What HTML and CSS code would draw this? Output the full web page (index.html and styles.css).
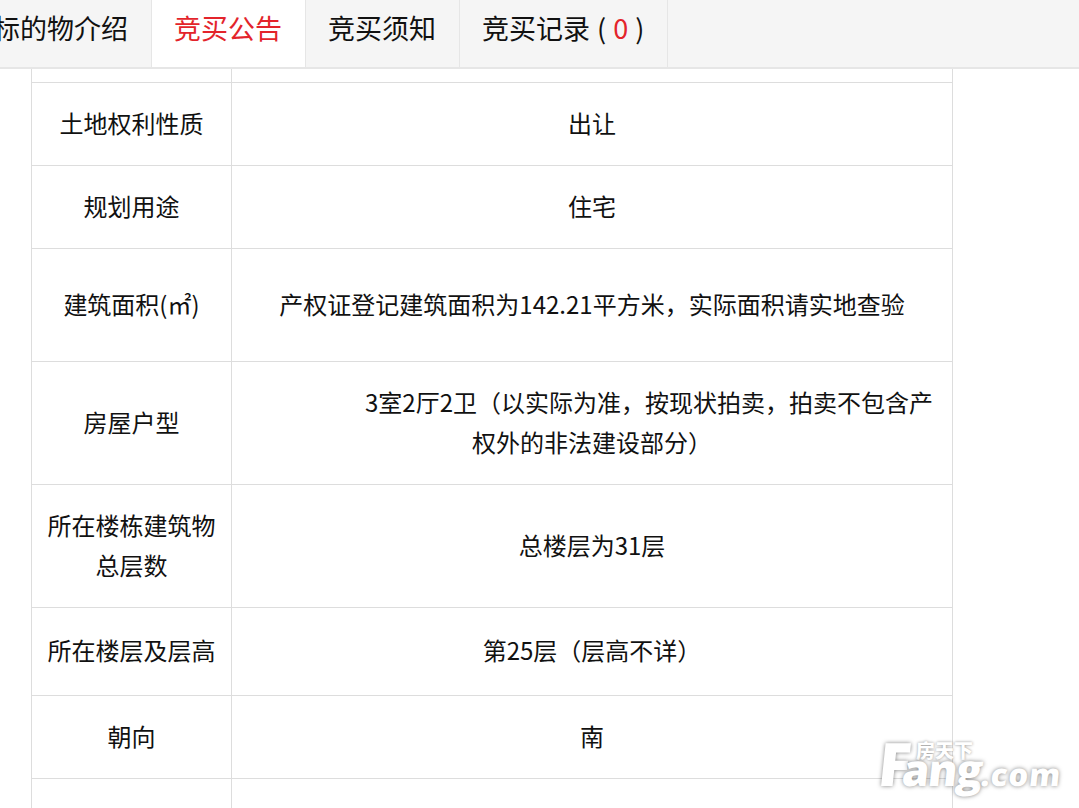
FILE: index.html
```
<!DOCTYPE html>
<html lang="zh-CN">
<head>
<meta charset="utf-8">
<title>竞买公告</title>
<link rel="stylesheet" href="styles.css">
</head>
<body>
<nav class="tabs">
  <div class="tab">标的物介绍</div>
  <div class="tab tab-active">竞买公告</div>
  <div class="tab">竞买须知</div>
  <div class="tab tab-wide">竞买记录 ( <span class="count">0</span> )</div>
</nav>
<main class="content">
  <table class="info">
    <colgroup><col class="col-label"><col></colgroup>
    <tr class="r-top"><td></td><td></td></tr>
    <tr class="r-83"><td>土地权利性质</td><td>出让</td></tr>
    <tr class="r-83"><td>规划用途</td><td>住宅</td></tr>
    <tr class="r-113"><td>建筑面积(㎡)</td><td>产权证登记建筑面积为142.21平方米，实际面积请实地查验</td></tr>
    <tr class="r-123"><td>房屋户型</td><td class="indented">3室2厅2卫（以实际为准，按现状拍卖，拍卖不包含产权外的非法建设部分）</td></tr>
    <tr class="r-123"><td>所在楼栋建筑物总层数</td><td>总楼层为31层</td></tr>
    <tr class="r-88"><td>所在楼层及层高</td><td>第25层（层高不详）</td></tr>
    <tr class="r-83"><td>朝向</td><td>南</td></tr>
    <tr class="r-83"><td></td><td></td></tr>
  </table>
</main>
<div class="watermark" aria-label="房天下 Fang.com">
  <span class="wm-cn">房天下</span>
  <span class="wm-en"><span class="wm-f">F</span><span class="wm-ang">ang</span><span class="wm-com">.com</span></span>
</div>
</body>
</html>
```
FILE: styles.css
```
* { box-sizing: border-box; }
html, body { height: 100%; }
body {
  margin: 0;
  height: 808px;
  overflow: hidden;
  background: #fff;
  color: #111;
  font-family: "Noto Sans CJK SC", "Liberation Sans", sans-serif;
  position: relative;
}
.tabs {
  display: flex;
  height: 69px;
  margin-left: -29px;
  background: #f5f5f5;
  border-bottom: 2px solid #e6e6e6;
}
.tab {
  height: 67px;
  line-height: 55px;
  padding: 0 23px 0 22px;
  font-size: 27px;
  border-right: 1px solid #e6e6e6;
  white-space: nowrap;
  color: #111;
}
.tab-wide { word-spacing: 1px; }
.tab-active {
  background: #fff;
  color: #e3242b;
}
.count { color: #e3242b; }
.content { padding-left: 31px; }
.info {
  width: 922px;
  table-layout: fixed;
  border-collapse: collapse;
  font-size: 24px;
  line-height: 40px;
  text-align: center;
}
.info td {
  border: 1px solid #ddd;
  padding: 0 15px 2px;
  vertical-align: middle;
}
.info td + td { padding: 0 18px 2px; }
.col-label { width: 200px; }
.r-top { height: 13px; }
.r-top td { border-top: 0; line-height: 1px; }
.info .r-top td { padding-bottom: 0; }
.r-83 { height: 83px; }
.r-88 { height: 88px; }
.r-113 { height: 113px; }
.r-123 { height: 123px; }
.info .indented { text-indent: 114px; }
.watermark {
  position: absolute;
  left: 878px;
  top: 733px;
  width: 190px;
  height: 60px;
  color: #fff;
  pointer-events: none;
}
.wm-cn {
  position: absolute;
  left: 38px;
  top: 5px;
  font-size: 19px;
  line-height: 24px;
  font-weight: 900;
  text-shadow: 0 0 3px rgba(0,0,0,.45);
}
.wm-en {
  position: absolute;
  left: 0;
  top: 0;
  font-family: "Open Sans", "Liberation Sans", sans-serif;
  font-weight: 800;
  line-height: 60px;
  white-space: nowrap;
  text-shadow: 0 0 4px rgba(0,0,0,.5);
  transform: skewX(-6deg);
}
.wm-f { font-size: 60px; letter-spacing: -8px; }
.wm-ang { font-size: 44px; letter-spacing: -1.5px; }
.wm-com { font-size: 31px; letter-spacing: 1px; }
```
